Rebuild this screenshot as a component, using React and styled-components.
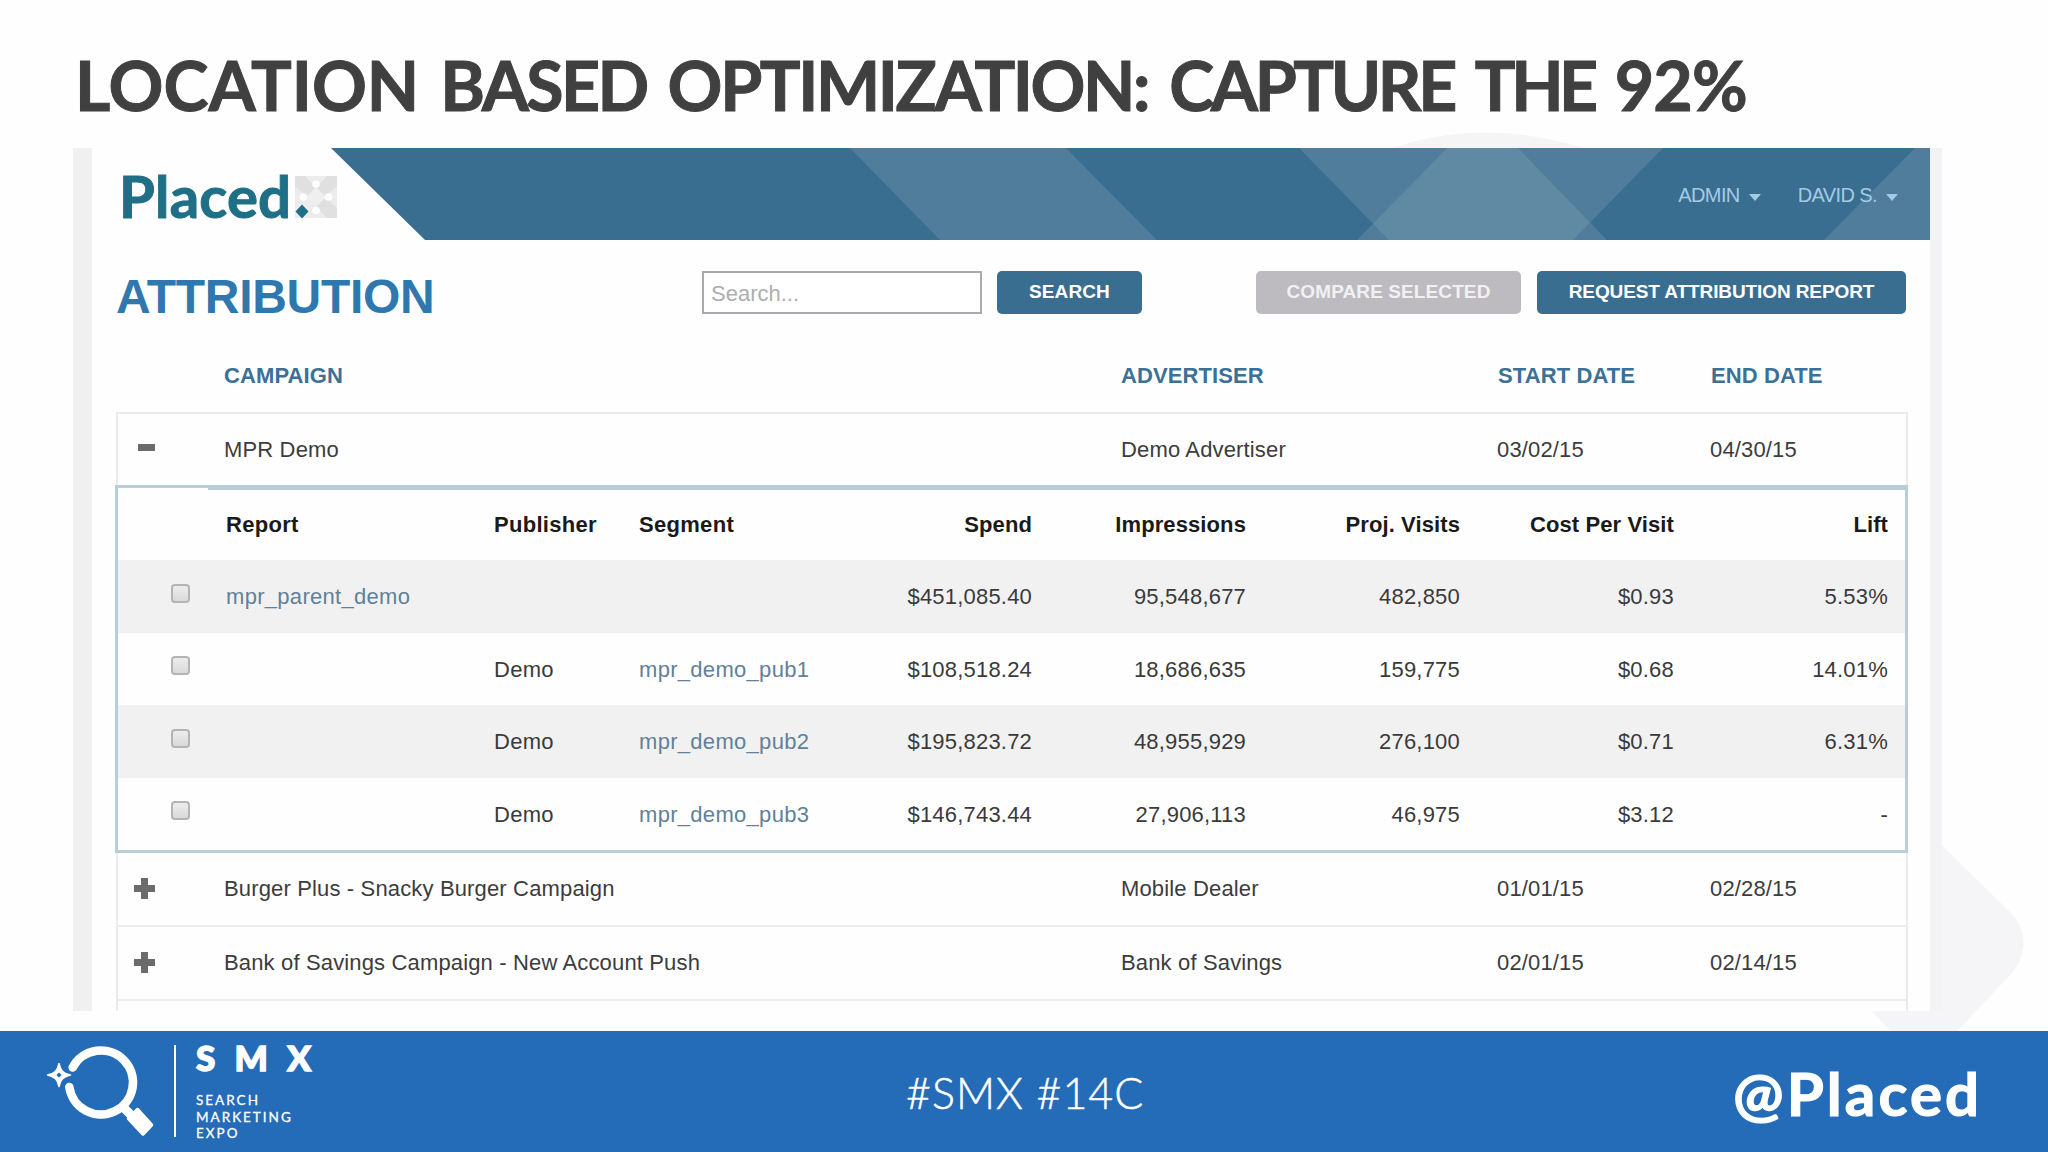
import React from 'react';
import styled, { createGlobalStyle } from 'styled-components';

const titleWords = [
  { text: 'LOCATION', tracking: 0 },
  { text: 'BASED', tracking: -2.6 },
  { text: 'OPTIMIZATION:', tracking: -2.4 },
  { text: 'CAPTURE', tracking: -3.4 },
  { text: 'THE', tracking: -4.5 },
  { text: '92%', tracking: -0.8 },
];

const campaigns = [
  {
    name: 'MPR Demo',
    advertiser: 'Demo Advertiser',
    start: '03/02/15',
    end: '04/30/15',
    reports: [
      { report: 'mpr_parent_demo', spend: '$451,085.40', impressions: '95,548,677', visits: '482,850', cost: '$0.93', lift: '5.53%' },
      { publisher: 'Demo', segment: 'mpr_demo_pub1', spend: '$108,518.24', impressions: '18,686,635', visits: '159,775', cost: '$0.68', lift: '14.01%' },
      { publisher: 'Demo', segment: 'mpr_demo_pub2', spend: '$195,823.72', impressions: '48,955,929', visits: '276,100', cost: '$0.71', lift: '6.31%' },
      { publisher: 'Demo', segment: 'mpr_demo_pub3', spend: '$146,743.44', impressions: '27,906,113', visits: '46,975', cost: '$3.12', lift: '-' },
    ],
  },
  {
    name: 'Burger Plus - Snacky Burger Campaign',
    advertiser: 'Mobile Dealer',
    start: '01/01/15',
    end: '02/28/15',
  },
  {
    name: 'Bank of Savings Campaign - New Account Push',
    advertiser: 'Bank of Savings',
    start: '02/01/15',
    end: '02/14/15',
  },
];

const HeaderPattern = () => (
  <PatternSvg width="1838" height="92" viewBox="92 148 1838 92">
    <polygon points="331,148 1930,148 1930,240 425,240" fill="#3a6e90" />
    <g fill="#a6b9c6" fillOpacity="0.2">
      <polygon points="850,148 1066,148 1157,240 940,240" />
      <polygon points="1299,148 1518,148 1607,240 1389,240" />
      <polygon points="1447,148 1663,148 1573,240 1357,240" />
      <polygon points="1915,148 1930,148 1930,240 1824,240" />
    </g>
  </PatternSvg>
);

const PlacedMark = () => (
  <svg width="42" height="43" viewBox="0 0 42 43">
    <rect width="42" height="42" fill="#ececec" />
    <g fill="#e0e0e0">
      <polygon points="0,0 10,0 21,12 12,21 0,10" />
      <polygon points="42,0 32,0 21,12 30,21 42,10" />
      <polygon points="42,42 32,42 21,30 30,21 42,32" />
    </g>
    <polygon points="21,11 31,21 21,31 11,21" fill="#efefef" />
    <g fill="#fdfdfd">
      <circle cx="21" cy="8" r="3.800" />
      <circle cx="8.500" cy="21" r="3.800" />
      <circle cx="33.500" cy="21" r="3.800" />
      <circle cx="21" cy="34.500" r="3.800" />
    </g>
    <polygon points="7,28.500 13.500,35.500 7,42.500 0.500,35.500" fill="#1f6f86" />
  </svg>
);

const SmxMark = () => (
  <svg width="96" height="98" viewBox="46 1042 96 98" overflow="visible">
    <path
      d="M72.700 1067.500 A32 32 0 1 1 69.300 1087"
      fill="none"
      stroke="#fff"
      strokeWidth="8.600"
      strokeLinecap="round"
    />
    <path d="M121 1105 L131 1115" stroke="#fff" strokeWidth="9" />
    <path
      d="M137.500 1109.500 L151.500 1125 L143 1134 L128.500 1118.500 Z"
      fill="#fff"
      stroke="#fff"
      strokeWidth="3.500"
      strokeLinejoin="round"
    />
    <path
      fillRule="evenodd"
      fill="#fff"
      stroke="#fff"
      strokeWidth="1.500"
      strokeLinejoin="round"
      d="M59 1063.500 C60.500 1070 62.500 1073 70.500 1075 C62.500 1077 60.500 1080 59 1086.500 C57.500 1080 55.500 1077 47.500 1075 C55.500 1073 57.500 1070 59 1063.500 Z M59 1071.300 L55.500 1075 L59 1078.700 L62.500 1075 Z"
    />
  </svg>
);

const Backdrop = () => (
  <BackdropSvg width="2048" height="1031" viewBox="0 0 2048 1031">
    <path d="M1386 150 Q1484 115 1590 150 Z" fill="#f5f5f6" />
    <path
      d="M1930 834 L2014 916 Q2034 944 2012 973 L1957 1031 L1890 1031 L1872 1011 L1930 1000 Z"
      fill="#f5f4f7"
    />
  </BackdropSvg>
);

const DetailTable = ({ reports }) => (
  <Detail>
    <DetailHead>
      <span />
      <span>Report</span>
      <span>Publisher</span>
      <span>Segment</span>
      <Num>Spend</Num>
      <Num>Impressions</Num>
      <Num>Proj. Visits</Num>
      <Num>Cost Per Visit</Num>
      <Num>Lift</Num>
    </DetailHead>
    {reports.map((r, i) => (
      <DetailRow key={r.spend} $shaded={i % 2 === 0}>
        <Checkbox type="checkbox" />
        <ReportLink>{r.report}</ReportLink>
        <span>{r.publisher}</span>
        <ReportLink>{r.segment}</ReportLink>
        <Num>{r.spend}</Num>
        <Num>{r.impressions}</Num>
        <Num>{r.visits}</Num>
        <Num>{r.cost}</Num>
        <Num>{r.lift}</Num>
      </DetailRow>
    ))}
  </Detail>
);

const App = () => {
  return (
    <Slide>
      <GlobalStyle />
      <Backdrop />
      <SlideTitle>
        {titleWords.map((word) => (
          <TitleWord key={word.text} $tracking={word.tracking}>
            {word.text}
          </TitleWord>
        ))}
      </SlideTitle>
      <Panel>
        <AppHeader>
          <HeaderPattern />
          <Brand>
            <BrandName>Placed</BrandName>
            <PlacedMark />
          </Brand>
          <Nav>
            <NavItem>
              ADMIN <Caret />
            </NavItem>
            <NavItem>
              DAVID S. <Caret />
            </NavItem>
          </Nav>
        </AppHeader>
        <Toolbar>
          <PageTitle>ATTRIBUTION</PageTitle>
          <SearchInput placeholder="Search..." />
          <Button $width={145}>SEARCH</Button>
          <Actions>
            <Button $width={265} $muted>
              COMPARE SELECTED
            </Button>
            <Button $width={369} $tight>
              REQUEST ATTRIBUTION REPORT
            </Button>
          </Actions>
        </Toolbar>
        <ColumnHeads>
          <span />
          <span>CAMPAIGN</span>
          <span>ADVERTISER</span>
          <span>START DATE</span>
          <span>END DATE</span>
        </ColumnHeads>
        <Table>
          {campaigns.map((c) => (
            <React.Fragment key={c.name}>
              <CampaignRow $open={!!c.reports}>
                <Toggle $open={!!c.reports} />
                <span>{c.name}</span>
                <span>{c.advertiser}</span>
                <span>{c.start}</span>
                <span>{c.end}</span>
              </CampaignRow>
              {c.reports && <DetailTable reports={c.reports} />}
            </React.Fragment>
          ))}
        </Table>
      </Panel>
      <Footer>
        <Smx>
          <SmxMark />
          <Divider />
          <div>
            <SmxName>SMX</SmxName>
            <SmxCaption>
              SEARCH
              <br />
              MARKETING
              <br />
              EXPO
            </SmxCaption>
          </div>
        </Smx>
        <Hashtags>#SMX #14C</Hashtags>
        <Handle>@Placed</Handle>
      </Footer>
    </Slide>
  );
};

export default App;

const GlobalStyle = createGlobalStyle`
  * {
    box-sizing: border-box;
  }

  body {
    margin: 0;
    background: #fefefe;
    overflow: hidden;
  }
`;

const Slide = styled.div`
  position: relative;
  display: flex;
  flex-direction: column;
  width: 2048px;
  height: 1152px;
  background: #fefefe;
  font-family: 'Liberation Sans', Arial, sans-serif;
`;

const BackdropSvg = styled.svg`
  position: absolute;
  top: 0;
  left: 0;
`;

const SlideTitle = styled.h1`
  position: relative;
  display: flex;
  gap: 21px;
  margin: 0;
  padding: 42px 0 0 75px;
  height: 148px;
  font-family: Lato, sans-serif;
  font-size: 68px;
  line-height: 86px;
  font-weight: 700;
  white-space: nowrap;
  color: #404040;
  -webkit-text-stroke: 1px #404040;
`;

const TitleWord = styled.span`
  letter-spacing: ${(props) => props.$tracking}px;
`;

const Panel = styled.main`
  position: relative;
  width: 1869px;
  height: 863px;
  margin-left: 73px;
  border-left: 19px solid #f0f0f0;
  border-right: 12px solid #f3f2f4;
  background: #fefefe;
  overflow: hidden;
`;

const AppHeader = styled.header`
  position: relative;
  display: flex;
  justify-content: space-between;
  height: 92px;
`;

const PatternSvg = styled.svg`
  position: absolute;
  top: 0;
  left: 0;
`;

const Brand = styled.div`
  position: relative;
  display: flex;
  gap: 5px;
  padding: 28px 0 0 27px;
`;

const BrandName = styled.span`
  width: 171px;
  margin-top: -2px;
  font-family: Lato, sans-serif;
  font-size: 58px;
  line-height: 43px;
  font-weight: 700;
  letter-spacing: 0.2px;
  color: #1f6f86;
  -webkit-text-stroke: 1px #1f6f86;
`;

const Nav = styled.nav`
  position: relative;
  display: flex;
  gap: 37px;
  padding: 35px 32px 0 0;
`;

const NavItem = styled.span`
  display: flex;
  align-items: center;
  gap: 9px;
  height: 24px;
  font-size: 20px;
  letter-spacing: -0.6px;
  white-space: nowrap;
  color: #a3cbe4;
`;

const Caret = styled.i`
  margin-top: 4px;
  border: 6px solid transparent;
  border-top: 7px solid #a3cbe4;
  border-bottom: 0;
`;

const Toolbar = styled.div`
  display: flex;
  height: 98px;
  padding: 31px 24px 0 24px;
`;

const PageTitle = styled.h2`
  width: 586px;
  margin: 0;
  font-size: 48px;
  line-height: 52px;
  font-weight: 700;
  letter-spacing: -0.3px;
  color: #2f78af;
`;

const SearchInput = styled.input`
  width: 280px;
  height: 43px;
  margin-right: 15px;
  padding: 2px 7px 0;
  border: 2px solid #aaaaae;
  background: #fff;
  font-family: inherit;
  font-size: 22px;

  &::placeholder {
    color: #aeaeae;
  }
`;

const Button = styled.button`
  width: ${(props) => props.$width}px;
  height: 43px;
  padding: 0 0 1px;
  border: 0;
  border-radius: 5px;
  background: ${(props) => (props.$muted ? '#bdbbbf' : '#3a6e90')};
  color: ${(props) => (props.$muted ? '#f1f1f3' : '#fff')};
  font-family: inherit;
  font-size: 19px;
  font-weight: 700;
  letter-spacing: ${(props) => (props.$tight ? '-0.1px' : '0.1px')};
  white-space: nowrap;
`;

const Actions = styled.div`
  display: flex;
  gap: 16px;
  margin-left: auto;
`;

const ColumnHeads = styled.div`
  display: grid;
  grid-template-columns: 108px 897px 377px 213px 1fr;
  align-items: center;
  height: 74px;
  margin: 0 22px 0 24px;
  padding-top: 2px;
  font-size: 22px;
  font-weight: 700;
  letter-spacing: 0.1px;
  color: #3b7097;
`;

const Table = styled.section`
  height: 620px;
  margin: 0 22px 0 24px;
  border: 2px solid #ebebee;
  border-bottom: 0;
`;

const CampaignRow = styled.div`
  display: grid;
  grid-template-columns: 106px 897px 376px 213px 1fr;
  align-items: center;
  height: ${(props) => (props.$open ? 71 : 74)}px;
  border-bottom: ${(props) => (props.$open ? 0 : '2px solid #ebebee')};
  font-size: 22px;
  letter-spacing: 0.15px;
  color: #3c3c3c;
`;

const Toggle = styled.i`
  width: 21px;
  height: 21px;
  margin: ${(props) => (props.$open ? '-4px 0 0 18px' : '-2px 0 0 16px')};
  background:
    linear-gradient(#6b6b6d, #6b6b6d) center / ${(props) => (props.$open ? '17px' : '21px')} 7px no-repeat,
    linear-gradient(#6b6b6d, #6b6b6d) center / ${(props) => (props.$open ? '0 0' : '7px 21px')} no-repeat;
`;

const Detail = styled.div`
  margin: 0 -2px 0 -3px;
  border: 3px solid #b9ccd9;
`;

const DetailRow = styled.div`
  position: relative;
  display: grid;
  grid-template-columns: 108px 268px 145px 179px repeat(5, 214px);
  align-items: center;
  height: 72.5px;
  padding-top: 2px;
  background: ${(props) => (props.$shaded ? '#f2f1f2' : 'transparent')};
  font-size: 22px;
  letter-spacing: 0.3px;
  color: #3a3a3a;
`;

const Num = styled.span`
  text-align: right;
  letter-spacing: 0.2px;
`;

const DetailHead = styled(DetailRow)`
  height: 72px;
  font-weight: 700;
  color: #1a1a1a;

  ${Num} {
    letter-spacing: 0.1px;
  }

  /* second half of the top rule starts after the checkbox column */
  &::before {
    content: '';
    position: absolute;
    top: 0;
    left: 90px;
    right: 0;
    height: 2px;
    background: #b9ccd9;
  }
`;

const ReportLink = styled.a`
  color: #5f8199;
`;

const Checkbox = styled.input`
  appearance: none;
  width: 19px;
  height: 19px;
  margin: -8px 0 0 53px;
  border: 2px solid #b4b4b4;
  border-radius: 4px;
  background: linear-gradient(#ececec, #dadada);
`;

const Footer = styled.footer`
  position: relative;
  display: grid;
  grid-template-columns: 46px 860px 827px 1fr;
  grid-template-areas: '. logo tags handle';
  height: 121px;
  margin-top: 20px;
  background: #246cb7;
  color: #fff;
  font-family: Lato, sans-serif;
`;

const Smx = styled.div`
  grid-area: logo;
  display: flex;
  padding-top: 11px;
`;

const Divider = styled.i`
  width: 2px;
  height: 92px;
  margin: 3px 20px 0 32px;
  background: #fff;
`;

const SmxName = styled.div`
  margin-top: -1px;
  font-size: 35px;
  line-height: 32px;
  font-weight: 900;
  letter-spacing: 19.3px;
  -webkit-text-stroke: 1.5px #fff;
`;

const SmxCaption = styled.div`
  margin-top: 19px;
  font-size: 13.5px;
  line-height: 16.5px;
  letter-spacing: 2px;
  -webkit-text-stroke: 0.3px #fff;
`;

const Hashtags = styled.div`
  grid-area: tags;
  padding-top: 35px;
  font-size: 43px;
  line-height: 54px;
  font-weight: 300;
  letter-spacing: 1px;
  -webkit-text-stroke: 0.5px #fff;
`;

const Handle = styled.div`
  grid-area: handle;
  padding-top: 27px;
  font-size: 60px;
  line-height: 70px;
  font-weight: 700;
  letter-spacing: 3.1px;
  -webkit-text-stroke: 1.2px #fff;
`;
